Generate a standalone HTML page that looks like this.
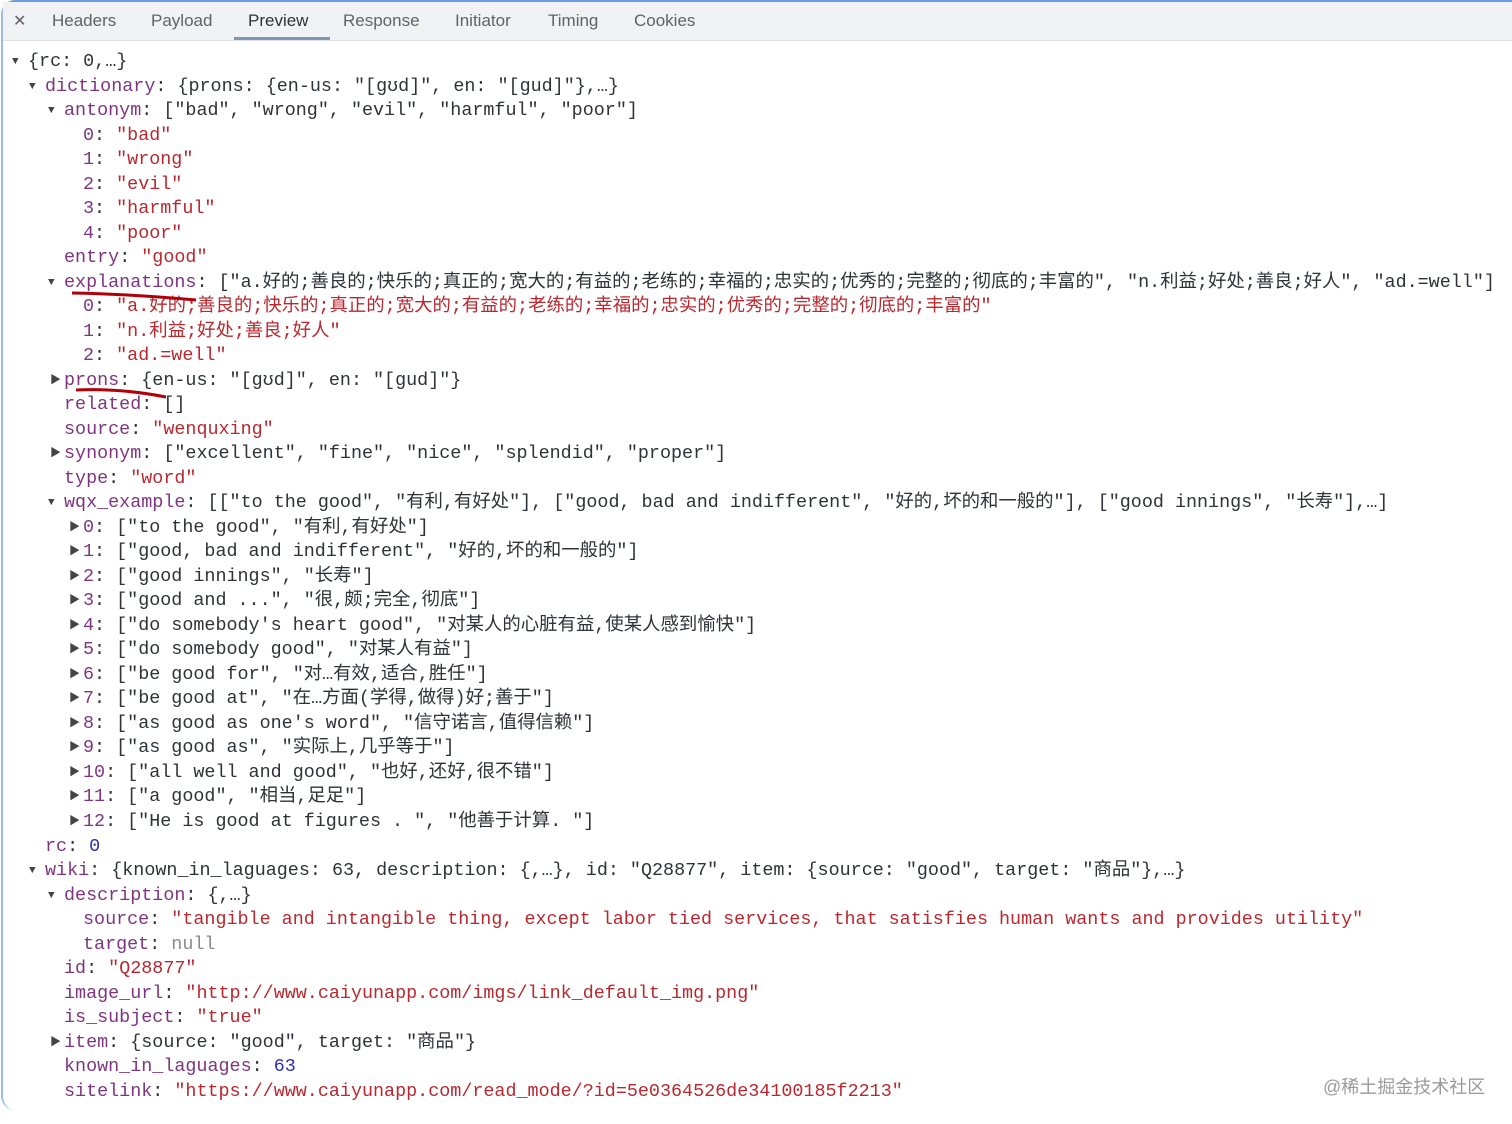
<!DOCTYPE html>
<html><head><meta charset="utf-8"><style>
html,body{margin:0;padding:0;background:#fff;width:1512px;height:1124px;overflow:hidden}
.frame{position:absolute;left:1px;top:0;width:1540px;height:1108px;border-left:2px solid #9dbbe6;border-top:2px solid #6d9be0;border-radius:14px 0 0 14px;}
.tabs{position:absolute;left:3px;top:2px;width:1509px;height:38px;background:#f1f2f4;border-bottom:1px solid #dfe1e4;font-family:"Liberation Sans",sans-serif;font-size:17px;color:#5f6368}
.tabs span{position:absolute;top:9px}
.ul{position:absolute;left:234px;top:37px;width:96px;height:3px;background:#7d95b8}
.code{position:absolute;left:0;top:50px;width:1512px;font-family:"Liberation Mono","Noto Sans CJK SC",monospace;font-size:18.4px;line-height:24.52px;color:#2f3238}
.code div{position:relative;height:24.52px;white-space:pre}
.k{color:#7f3481}
.s{color:#b9282f}
.n{color:#2a2fb4}
.g{color:#8a8a8a}
.t{position:absolute;font-size:11px;color:#444;top:0}
.wm{position:absolute;left:1323px;top:1073px;font-family:"Liberation Sans","Noto Sans CJK SC",sans-serif;font-size:18px;color:#9a9a9a}
</style></head><body>
<div class="frame"></div>
<div class="tabs">
<span style="left:10px;font-size:16px">✕</span>
<span style="left:49px">Headers</span>
<span style="left:148px">Payload</span>
<span style="left:245px;color:#303338">Preview</span>
<span style="left:340px">Response</span>
<span style="left:452px">Initiator</span>
<span style="left:545px">Timing</span>
<span style="left:631px">Cookies</span>
<div class="ul" style="left:231px;top:35px"></div>
</div>
<div class="code"><div style="left:28px"><span class="t" style="left:-16px">▼</span>{rc: 0,…}</div><div style="left:45px"><span class="t" style="left:-16px">▼</span><span class="k">dictionary</span>: {prons: {en-us: "[gʊd]", en: "[gud]"},…}</div><div style="left:64px"><span class="t" style="left:-16px">▼</span><span class="k">antonym</span>: ["bad", "wrong", "evil", "harmful", "poor"]</div><div style="left:83px"><span class="k">0</span>: <span class="s">"bad"</span></div><div style="left:83px"><span class="k">1</span>: <span class="s">"wrong"</span></div><div style="left:83px"><span class="k">2</span>: <span class="s">"evil"</span></div><div style="left:83px"><span class="k">3</span>: <span class="s">"harmful"</span></div><div style="left:83px"><span class="k">4</span>: <span class="s">"poor"</span></div><div style="left:64px"><span class="k">entry</span>: <span class="s">"good"</span></div><div style="left:64px"><span class="t" style="left:-16px">▼</span><span class="k">explanations</span>: ["a.好的;善良的;快乐的;真正的;宽大的;有益的;老练的;幸福的;忠实的;优秀的;完整的;彻底的;丰富的", "n.利益;好处;善良;好人", "ad.=well"]</div><div style="left:83px"><span class="k">0</span>: <span class="s">"a.好的;善良的;快乐的;真正的;宽大的;有益的;老练的;幸福的;忠实的;优秀的;完整的;彻底的;丰富的"</span></div><div style="left:83px"><span class="k">1</span>: <span class="s">"n.利益;好处;善良;好人"</span></div><div style="left:83px"><span class="k">2</span>: <span class="s">"ad.=well"</span></div><div style="left:64px"><span class="t" style="left:-14px">▶</span><span class="k">prons</span>: {en-us: "[gʊd]", en: "[gud]"}</div><div style="left:64px"><span class="k">related</span>: []</div><div style="left:64px"><span class="k">source</span>: <span class="s">"wenquxing"</span></div><div style="left:64px"><span class="t" style="left:-14px">▶</span><span class="k">synonym</span>: ["excellent", "fine", "nice", "splendid", "proper"]</div><div style="left:64px"><span class="k">type</span>: <span class="s">"word"</span></div><div style="left:64px"><span class="t" style="left:-16px">▼</span><span class="k">wqx_example</span>: [["to the good", "有利,有好处"], ["good, bad and indifferent", "好的,坏的和一般的"], ["good innings", "长寿"],…]</div><div style="left:83px"><span class="t" style="left:-14px">▶</span><span class="k">0</span>: ["to the good", "有利,有好处"]</div><div style="left:83px"><span class="t" style="left:-14px">▶</span><span class="k">1</span>: ["good, bad and indifferent", "好的,坏的和一般的"]</div><div style="left:83px"><span class="t" style="left:-14px">▶</span><span class="k">2</span>: ["good innings", "长寿"]</div><div style="left:83px"><span class="t" style="left:-14px">▶</span><span class="k">3</span>: ["good and ...", "很,颇;完全,彻底"]</div><div style="left:83px"><span class="t" style="left:-14px">▶</span><span class="k">4</span>: ["do somebody's heart good", "对某人的心脏有益,使某人感到愉快"]</div><div style="left:83px"><span class="t" style="left:-14px">▶</span><span class="k">5</span>: ["do somebody good", "对某人有益"]</div><div style="left:83px"><span class="t" style="left:-14px">▶</span><span class="k">6</span>: ["be good for", "对…有效,适合,胜任"]</div><div style="left:83px"><span class="t" style="left:-14px">▶</span><span class="k">7</span>: ["be good at", "在…方面(学得,做得)好;善于"]</div><div style="left:83px"><span class="t" style="left:-14px">▶</span><span class="k">8</span>: ["as good as one's word", "信守诺言,值得信赖"]</div><div style="left:83px"><span class="t" style="left:-14px">▶</span><span class="k">9</span>: ["as good as", "实际上,几乎等于"]</div><div style="left:83px"><span class="t" style="left:-14px">▶</span><span class="k">10</span>: ["all well and good", "也好,还好,很不错"]</div><div style="left:83px"><span class="t" style="left:-14px">▶</span><span class="k">11</span>: ["a good", "相当,足足"]</div><div style="left:83px"><span class="t" style="left:-14px">▶</span><span class="k">12</span>: ["He is good at figures . ", "他善于计算. "]</div><div style="left:45px"><span class="k">rc</span>: <span class="n">0</span></div><div style="left:45px"><span class="t" style="left:-16px">▼</span><span class="k">wiki</span>: {known_in_laguages: 63, description: {,…}, id: "Q28877", item: {source: "good", target: "商品"},…}</div><div style="left:64px"><span class="t" style="left:-16px">▼</span><span class="k">description</span>: {,…}</div><div style="left:83px"><span class="k">source</span>: <span class="s">"tangible and intangible thing, except labor tied services, that satisfies human wants and provides utility"</span></div><div style="left:83px"><span class="k">target</span>: <span class="g">null</span></div><div style="left:64px"><span class="k">id</span>: <span class="s">"Q28877"</span></div><div style="left:64px"><span class="k">image_url</span>: <span class="s">"http://www.caiyunapp.com/imgs/link_default_img.png"</span></div><div style="left:64px"><span class="k">is_subject</span>: <span class="s">"true"</span></div><div style="left:64px"><span class="t" style="left:-14px">▶</span><span class="k">item</span>: {source: "good", target: "商品"}</div><div style="left:64px"><span class="k">known_in_laguages</span>: <span class="n">63</span></div><div style="left:64px"><span class="k">sitelink</span>: <span class="s">"https://www.caiyunapp.com/read_mode/?id=5e0364526de34100185f2213"</span></div></div>
<svg style="position:absolute;left:0;top:0" width="1512" height="1124">
<path d="M72 293 Q130 294 196 300" stroke="#b0000a" stroke-width="3" fill="none"/>
<path d="M76 390 Q120 388 166 397" stroke="#b0000a" stroke-width="3" fill="none"/>
</svg>
<div class="wm">@稀土掘金技术社区</div>
</body></html>
